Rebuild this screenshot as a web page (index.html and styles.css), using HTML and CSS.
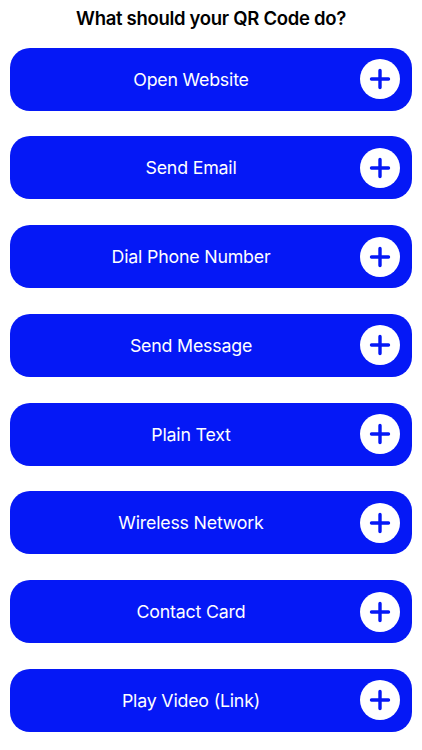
FILE: index.html
```html
<!DOCTYPE html>
<html lang="en">
<head>
<meta charset="utf-8">
<title>QR Code</title>
<link rel="stylesheet" href="styles.css">
</head>
<body>
<h1 class="title">What should your QR Code do?</h1>
<div class="list">
  <div class="btn"><span class="label">Open Website</span><span class="plus"><svg viewBox="0 0 40 40"><path d="M20 11.5v17M11.5 20h17"/></svg></span></div>
  <div class="btn"><span class="label">Send Email</span><span class="plus"><svg viewBox="0 0 40 40"><path d="M20 11.5v17M11.5 20h17"/></svg></span></div>
  <div class="btn"><span class="label">Dial Phone Number</span><span class="plus"><svg viewBox="0 0 40 40"><path d="M20 11.5v17M11.5 20h17"/></svg></span></div>
  <div class="btn"><span class="label">Send Message</span><span class="plus"><svg viewBox="0 0 40 40"><path d="M20 11.5v17M11.5 20h17"/></svg></span></div>
  <div class="btn"><span class="label">Plain Text</span><span class="plus"><svg viewBox="0 0 40 40"><path d="M20 11.5v17M11.5 20h17"/></svg></span></div>
  <div class="btn"><span class="label">Wireless Network</span><span class="plus"><svg viewBox="0 0 40 40"><path d="M20 11.5v17M11.5 20h17"/></svg></span></div>
  <div class="btn"><span class="label">Contact Card</span><span class="plus"><svg viewBox="0 0 40 40"><path d="M20 11.5v17M11.5 20h17"/></svg></span></div>
  <div class="btn"><span class="label">Play Video (Link)</span><span class="plus"><svg viewBox="0 0 40 40"><path d="M20 11.5v17M11.5 20h17"/></svg></span></div>
</div>
</body>
</html>
```
FILE: styles.css
```css
* { box-sizing: border-box; }
html, body { margin: 0; padding: 0; background: #fff; }
body { font-family: Inter, "Liberation Sans", sans-serif; }
.title {
  margin: 0;
  padding-top: 7px;
  height: 47.5px;
  text-align: center;
  font-size: 18.5px;
  font-weight: 600;
  line-height: 23px;
  color: #000;
  letter-spacing: -0.3px;
}
.list {
  display: flex;
  flex-direction: column;
  gap: 25.75px;
  padding: 0 10px;
}
.btn {
  height: 63px;
  background: #0518f6;
  border-radius: 20px;
  display: flex;
  align-items: center;
  padding: 0 12px 0 22px;
  gap: 10px;
}
.label {
  flex: 1;
  text-align: center;
  color: #fff;
  font-size: 17.8px;
  font-weight: 400;
  letter-spacing: -0.2px;
}
.plus {
  width: 40px;
  height: 40px;
  border-radius: 50%;
  background: #fff;
  display: flex;
}
.plus svg { width: 40px; height: 40px; }
.plus path { stroke: #0518f6; stroke-width: 3.4; stroke-linecap: round; fill: none; }
```
